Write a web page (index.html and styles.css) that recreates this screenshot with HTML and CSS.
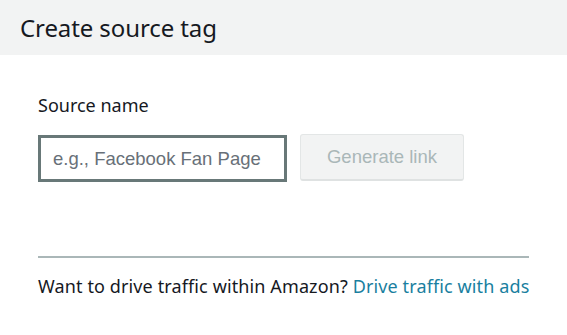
FILE: index.html
```html
<!DOCTYPE html>
<html lang="en">
<head>
  <meta charset="UTF-8">
  <title>Create source tag</title>
  <link rel="stylesheet" href="styles.css">
</head>
<body>
  <div class="header">
    <h1 class="title">Create source tag</h1>
  </div>

  <div class="content">
    <label class="field-label" for="source-name">Source name</label>
    <div class="field-row">
      <input class="source-input" id="source-name" type="text" placeholder="e.g., Facebook Fan Page">
      <button class="generate-button" disabled>Generate link</button>
    </div>

    <div class="footer">
      Want to drive traffic within Amazon? <a href="#" class="footer-link">Drive traffic with ads</a>
    </div>
  </div>
</body>
</html>
```

FILE: styles.css
```css
* {
  margin: 0;
  padding: 0;
  box-sizing: border-box;
}

body {
  width: 567px;
  font-family: "Noto Sans", "Open Sans", sans-serif;
  background: white;
  color: #16191f;
}

.header {
  height: 55px;
  background: #f2f3f3;
  padding: 0 20px;
  display: flex;
  align-items: center;
}

.title {
  font-size: 24px;
  font-weight: 400;
  letter-spacing: -0.1px;
}

.content {
  padding: 37px 38px 0;
}

.field-label {
  display: block;
  font-size: 18px;
  line-height: 26px;
  margin-bottom: 17px;
}

.field-row {
  display: flex;
  align-items: flex-start;
  gap: 13px;
}

.source-input {
  width: 249px;
  height: 47px;
  border: 3px solid #687878;
  padding: 0 12px;
  font-family: "Liberation Sans", Arial, sans-serif;
  font-size: 18.5px;
  color: #16191f;
  outline: none;
}

.source-input::placeholder {
  color: #687078;
}

.generate-button {
  width: 164px;
  height: 47px;
  margin-top: -1px;
  background: #f2f3f3;
  border: 1px solid #e3e6e6;
  border-bottom: 2px solid #dfe2e2;
  border-radius: 3px;
  font-family: "Liberation Sans", Arial, sans-serif;
  font-size: 18.5px;
  color: #aab7b8;
}

.footer {
  margin-top: 74px;
  padding-top: 15px;
  border-top: 2px solid #aab7b8;
  width: 491px;
  font-size: 18px;
  line-height: 26px;
  letter-spacing: 0.12px;
  white-space: nowrap;
}

.footer-link {
  color: #1a7fa0;
  text-decoration: none;
}
```
